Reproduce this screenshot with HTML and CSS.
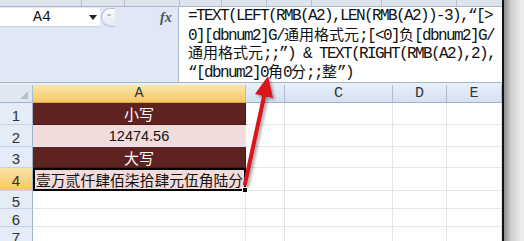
FILE: index.html
```html
<!DOCTYPE html>
<html>
<head>
<meta charset="utf-8">
<link rel="stylesheet" href="styles.css">
</head>
<body>
<div class="app">
  <div class="main">
    <div class="topstrip">
      <span style="width:82px"></span><span style="width:43px"></span><span style="width:55px"></span><span style="width:42px"></span><span style="width:45px"></span><span style="width:45px"></span><span style="width:70px"></span><span style="width:75px"></span>
    </div>
    <div class="fbar">
      <div class="fleft">
        <div class="namebox"><span class="ref">A4</span><span class="dd"></span></div>
        <div class="handle"><span class="dash"></span></div>
        <div class="fx">fx</div>
      </div>
      <div class="formula">
        <div class="fl">=TEXT(LEFT(RMB(A2),LEN(RMB(A2))-3),“[&gt;</div>
        <div class="fl">0][dbnum2]G/<span class="cj">通用格式元</span>;[&lt;0]<span class="cj">负</span>[dbnum2]G/</div>
        <div class="fl"><span class="cj">通用格式元</span>;;”) &amp; TEXT(RIGHT(RMB(A2),2),</div>
        <div class="fl">“[dbnum2]0<span class="cj">角</span>0<span class="cj">分</span>;;<span class="cj">整</span>”)</div>
      </div>
    </div>
    <div class="sep"></div>
    <div class="grid">
      <div class="hd corner"><span class="tri"></span></div>
      <div class="hd sel">A</div>
      <div class="hd">B</div>
      <div class="hd">C</div>
      <div class="hd">D</div>
      <div class="hd">E</div>

      <div class="rh">1</div>
      <div class="c maroon">小写</div>
      <div class="c"></div><div class="c"></div><div class="c"></div><div class="c"></div>

      <div class="rh">2</div>
      <div class="c pink num">12474.56</div>
      <div class="c"></div><div class="c"></div><div class="c"></div><div class="c"></div>

      <div class="rh">3</div>
      <div class="c maroon">大写</div>
      <div class="c"></div><div class="c"></div><div class="c"></div><div class="c"></div>

      <div class="rh rsel">4</div>
      <div class="a4">壹万贰仟肆佰柒拾肆元伍角陆分<span class="fill"></span></div>
      <div class="c"></div><div class="c"></div><div class="c"></div><div class="c"></div>

      <div class="rh">5</div>
      <div class="c"></div><div class="c"></div><div class="c"></div><div class="c"></div><div class="c"></div>

      <div class="rh">6</div>
      <div class="c"></div><div class="c"></div><div class="c"></div><div class="c"></div><div class="c"></div>

      <div class="rh">7</div>
      <div class="c"></div><div class="c"></div><div class="c"></div><div class="c"></div><div class="c"></div>
    </div>
  </div>
  <div class="edge"></div>
  <div class="shadow"></div>
  <svg class="arrow" width="524" height="241" viewBox="0 0 524 241">
    <defs>
      <filter id="sh" x="-50%" y="-50%" width="200%" height="200%">
        <feDropShadow dx="2" dy="2" stdDeviation="1.5" flood-color="#000" flood-opacity="0.35"/>
      </filter>
    </defs>
    <g filter="url(#sh)">
      <line x1="245" y1="184" x2="265" y2="92" stroke="#d8141c" stroke-width="4" stroke-linecap="round"/>
      <polygon points="268,76 255,94 273,98" fill="#d8141c"/>
    </g>
  </svg>
</div>
</body>
</html>
```

FILE: styles.css
```css
* { box-sizing: border-box; margin: 0; padding: 0; }
html, body { width: 524px; height: 241px; overflow: hidden; background: #fff; }
body { font-family: "Liberation Sans", "Noto Sans CJK SC", sans-serif; }

.app { position: relative; display: flex; width: 524px; height: 241px; overflow: hidden; }
.main { width: 502px; flex: none; display: flex; flex-direction: column; overflow: hidden; }
.edge { width: 2px; flex: none; background: #111; }
.shadow { flex: 1; background: linear-gradient(to right, #8e8e8e, #cdcdcd 35%, #ececec 85%); }

.topstrip { height: 7px; flex: none; display: flex; background: #dde4ee; border-bottom: 1px solid #a9b8cc; }
.topstrip span { height: 100%; border-right: 1px solid #b4c0d0; }

.fbar { height: 75px; flex: none; display: flex; background: #dfe8f4; }
.fleft { width: 178px; flex: none; display: flex; align-items: flex-start; padding-top: 1px; }
.namebox { width: 100px; height: 19px; background: #fff; display: flex; align-items: center; border-bottom: 1px solid #c9d5e4; }
.ref { font-family: "Liberation Mono", monospace; font-size: 15px; margin-left: 33px; width: 56px; color: #111; }
.dd { width: 0; height: 0; border-left: 4px solid transparent; border-right: 4px solid transparent; border-top: 5px solid #222; }
.handle { width: 14px; height: 19px; margin-left: 1px; border: 1px solid #b3bfcf; border-right: none; border-radius: 10px 0 0 10px; background: linear-gradient(#fbfcfe, #e3e9f1); display: flex; align-items: center; justify-content: center; }
.dash { width: 4px; height: 2px; background: #b8c1cc; margin-top: -6px; }
.fx { margin-left: 45px; font-family: "Liberation Serif", serif; font-style: italic; font-weight: bold; font-size: 14px; line-height: 19px; color: #46536b; }

.formula { flex: 1; background: #fff; border-left: 1px solid #a9b8cc; padding: 0 0 0 9px; font-family: "Liberation Mono", "Noto Sans CJK SC", monospace; font-size: 16px; letter-spacing: -1.6px; line-height: 18px; color: #111; overflow: hidden; }
.fl { white-space: pre; height: 18.5px; line-height: 18px; }
.cj { letter-spacing: 0; font-family: "Noto Sans CJK SC", sans-serif; font-size: 15px; line-height: 16px; }

.sep { height: 3px; flex: none; background: #e9eff7; border-top: 1px solid #a7b5c8; }

.grid { display: grid; grid-template-columns: 33px 213px 39px 108px 54px 55px; grid-template-rows: 18px 22px 22px 21px 23px 18px 18px 18px; }
.c { border-right: 1px solid #e2e6ec; border-bottom: 1px solid #e2e6ec; }
.hd { background: linear-gradient(#e7eefa, #d5e1f1); border-right: 1px solid #a9bcd4; border-bottom: 1px solid #9eb3cc; font-family: "Liberation Mono", monospace; font-size: 15px; color: #333; display: flex; align-items: center; justify-content: center; }
.hd.sel { background: linear-gradient(#fce6ad, #f5c865); border-bottom-color: #d9a546; }
.corner { position: relative; background: #dfe7f3; }
.tri { position: absolute; right: 4px; bottom: 3px; width: 0; height: 0; border-left: 8px solid transparent; border-bottom: 8px solid #b7c1cd; }
.rh { background: #e4ecf7; border-right: 1px solid #9eb3cc; border-bottom: 1px solid #c5d3e4; font-family: "Liberation Sans", sans-serif; font-size: 15px; color: #333; display: flex; align-items: center; justify-content: center; padding-top: 3px; }
.rh.rsel { background: linear-gradient(#fbe3a7, #f5c865); }

.maroon { background: #5e2220; color: #fff; font-family: "Noto Sans CJK SC", sans-serif; font-size: 15px; display: flex; align-items: center; justify-content: center; border-right-color: #4a1816; border-bottom-color: #4a1816; }
.pink { background: #f2dcdb; }
.num { font-family: "Liberation Sans", sans-serif; font-size: 14.5px; color: #111; display: flex; align-items: center; justify-content: center; }
.a4 { position: relative; background: #f2dcdb; border: 2px solid #000; font-family: "Noto Sans CJK SC", sans-serif; font-size: 14.8px; line-height: 19px; padding-left: 1px; color: #111; white-space: nowrap; }
.fill { position: absolute; right: -4px; bottom: -4px; width: 6px; height: 6px; background: #000; border: 1px solid #fff; }

.arrow { position: absolute; left: 0; top: 0; pointer-events: none; }
```
